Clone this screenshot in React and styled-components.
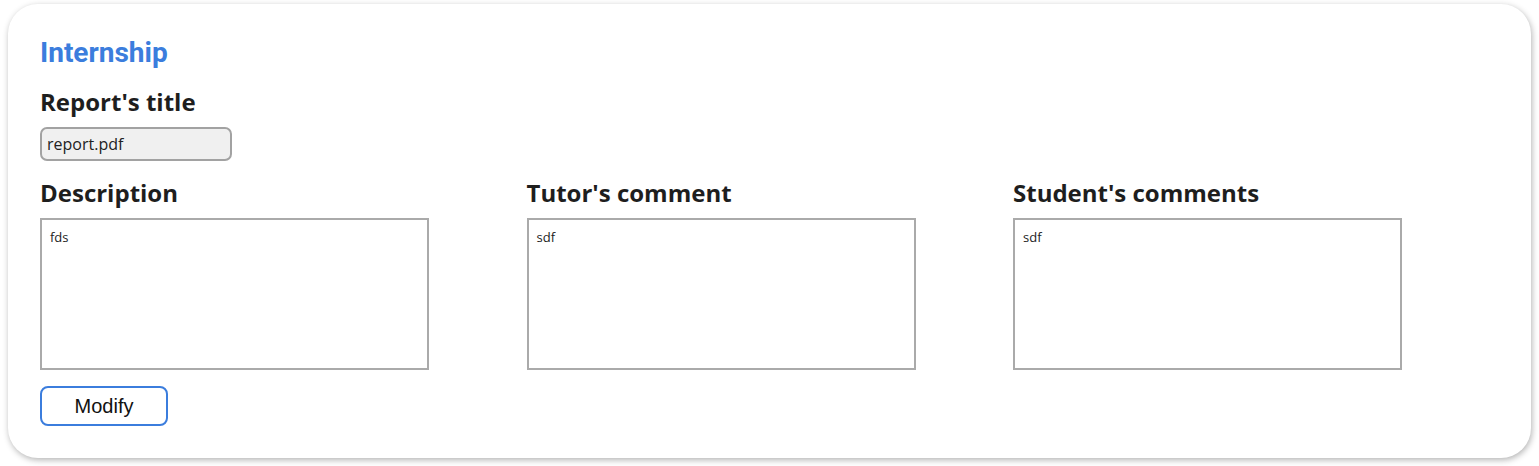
import React, { useState } from "react";
import styled, { createGlobalStyle } from "styled-components";

const GlobalStyle = createGlobalStyle`
  body {
    margin: 0;
    background: #ffffff;
    font-family: "Open Sans", sans-serif;
  }
`;

const App = () => {
  const [form, setForm] = useState({
    description: "fds",
    tutor: "sdf",
    student: "sdf",
  });

  const handleChange = (e) => {
    const { name, value } = e.target;
    setForm((prev) => ({ ...prev, [name]: value }));
  };

  return (
    <>
      <GlobalStyle />
      <Page>
        <Card>
          <Title>Internship</Title>
          <Heading>Report's title</Heading>
          <FileInput type="text" value="report.pdf" readOnly />
          <Columns>
            <Field>
              <Heading>Description</Heading>
              <TextArea name="description" value={form.description} onChange={handleChange} />
            </Field>
            <Field>
              <Heading>Tutor's comment</Heading>
              <TextArea name="tutor" value={form.tutor} onChange={handleChange} />
            </Field>
            <Field>
              <Heading>Student's comments</Heading>
              <TextArea name="student" value={form.student} onChange={handleChange} />
            </Field>
          </Columns>
          <ModifyButton type="button">Modify</ModifyButton>
        </Card>
      </Page>
    </>
  );
};

const Page = styled.div`
  padding: 4px 8px 8px 8px;
`;

const Card = styled.div`
  width: 1523px;
  box-sizing: border-box;
  background: #ffffff;
  border-radius: 30px;
  box-shadow: 1px 2px 6px rgba(0, 0, 0, 0.3);
  padding: 32px;
  display: flex;
  flex-direction: column;
  align-items: flex-start;
`;

const Title = styled.h2`
  margin: 1px 0 17px 0;
  font-family: Roboto, sans-serif;
  font-weight: 700;
  font-size: 28px;
  line-height: 32px;
  color: #3b7ddd;
`;

const Heading = styled.h3`
  margin: 0 0 9px 0;
  font-family: "Open Sans", sans-serif;
  font-weight: 700;
  font-size: 24px;
  line-height: 32px;
  color: #1e1e1e;
`;

const FileInput = styled.input`
  box-sizing: border-box;
  width: 192px;
  height: 34px;
  margin: 0 0 16px 0;
  padding: 0 5px;
  border: 2px solid #a2a2a2;
  border-radius: 7px;
  background: #f0f0f0;
  font-family: "Open Sans", sans-serif;
  font-size: 16px;
  color: #222;
  outline: none;
`;

const Columns = styled.div`
  display: grid;
  grid-template-columns: repeat(3, 389px);
  column-gap: 97.5px;
  margin-bottom: 16px;
`;

const Field = styled.div`
  display: flex;
  flex-direction: column;
`;

const TextArea = styled.textarea`
  box-sizing: border-box;
  width: 389px;
  height: 152px;
  margin: 0;
  padding: 8px 8px;
  border: 2px solid #aaaaaa;
  border-radius: 0;
  resize: none;
  font-family: "Open Sans", sans-serif;
  font-size: 13px;
  line-height: 18px;
  color: #222;
  outline: none;
`;

const ModifyButton = styled.button`
  box-sizing: border-box;
  width: 128px;
  height: 40px;
  background: #ffffff;
  border: 2px solid #3b7ddd;
  border-radius: 8px;
  font-family: "Liberation Sans", Arial, sans-serif;
  font-size: 20px;
  color: #111;
  cursor: pointer;
`;

export default App;
